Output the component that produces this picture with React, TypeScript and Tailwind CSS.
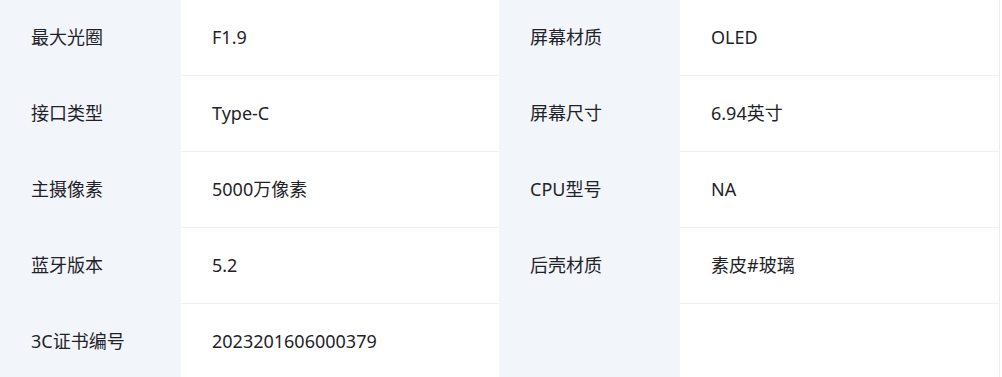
import React from "react";

const rows: Array<[string, string, string, string]> = [
  ["最大光圈", "F1.9", "屏幕材质", "OLED"],
  ["接口类型", "Type-C", "屏幕尺寸", "6.94英寸"],
  ["主摄像素", "5000万像素", "CPU型号", "NA"],
  ["蓝牙版本", "5.2", "后壳材质", "素皮#玻璃"],
  ["3C证书编号", "2023201606000379", "", ""],
];

export default function App() {
  return (
    <div
      className="w-[1000px] bg-white text-[18px] text-[#1f2329] border-r border-[#ebedf0]"
      style={{ fontFamily: '"Noto Sans", "Noto Sans CJK SC", sans-serif' }}
    >
      {rows.map((r, i) => (
        <div key={i} className="grid grid-cols-[181px_318px_181px_1fr] h-[76px]">
          <div className="bg-[#f2f5f9] flex items-center pl-[31px] pb-px">{r[0]}</div>
          <div className="flex items-center pl-[31px] border-b border-[#eef0f3]">{r[1]}</div>
          <div className="bg-[#f2f5f9] flex items-center pl-[31px] pb-px">{r[2]}</div>
          <div className="flex items-center pl-[31px] border-b border-[#eef0f3]">{r[3]}</div>
        </div>
      ))}
    </div>
  );
}
